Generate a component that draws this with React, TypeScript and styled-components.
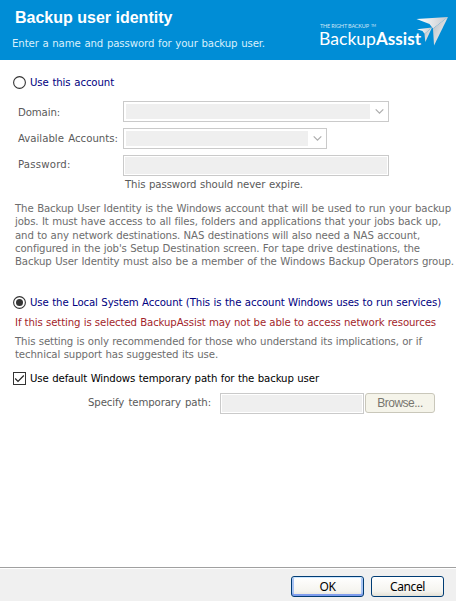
import React from 'react';
import styled, { createGlobalStyle } from 'styled-components';

const Global = createGlobalStyle`
  * { box-sizing: border-box; }
  body { margin: 0; background: #fff; }
`;

const Dialog = styled.main`
  width: 456px;
  height: 601px;
  display: flex;
  flex-direction: column;
  overflow: hidden;
  background: #fff;
  font: 11.3px/13px 'DejaVu Sans Condensed', 'Noto Sans', sans-serif;
  color: #5a5a5a;
`;

const Header = styled.header`
  height: 60px;
  flex: none;
  display: flex;
  justify-content: space-between;
  background: #008dd6;
  color: #fff;
`;

const Heading = styled.div`
  padding: 9px 0 0 12px;
`;

const Title = styled.h1`
  margin: 0 0 0 3px;
  font: bold 16px/18px 'Liberation Sans', Arial, sans-serif;
`;

const Logo = styled.svg`
  display: block;
  width: 140px;
  height: 60px;
  flex: none;
`;

/* One line of text set to an exact measure */
const Line = styled.div<{ $w: number; $track?: number }>`
  width: ${p => p.$w}px;
  height: 13px;
  line-height: 13px;
  white-space: nowrap;
  text-align: justify;
  text-align-last: justify;
  letter-spacing: ${p => p.$track ?? -0.11}px;
`;

const Subtitle = styled(Line)`
  margin-top: 10px;
  color: #d9f0fc;
`;

const Body = styled.section`
  flex: 1;
  padding: 16px 0 0 13px;
`;

const Option = styled.label<{ $color: string }>`
  display: flex;
  align-items: center;
  gap: 4px;
  height: 13px;
  color: ${p => p.$color};
`;

const Mark = styled.svg`
  display: block;
  width: 13px;
  height: 13px;
  flex: none;
`;

const Fields = styled.div`
  display: grid;
  grid-template-columns: 105px auto;
  grid-auto-rows: 21px;
  row-gap: 6px;
  justify-content: start;
  padding: 12px 0 0 5px;
`;

const Label = styled.div<{ $up?: number }>`
  padding-top: ${p => 5 - (p.$up ?? 0)}px;
`;

const Field = styled.div<{ $w: number; $combo?: boolean }>`
  width: ${p => p.$w}px;
  height: 21px;
  display: flex;
  justify-content: space-between;
  align-items: center;
  border: 1px solid #cacaca;
  padding: ${p => (p.$combo ? '2px 4px 2px 2px' : '1px')};
  background: #fff;
`;

const Fill = styled.div<{ $w?: number }>`
  height: 100%;
  width: ${p => (p.$w ? `${p.$w}px` : '100%')};
  background: #efefef;
`;

const Chevron = styled.svg`
  display: block;
  width: 9px;
  height: 7px;
`;

const Hint = styled.div`
  padding: 2px 0 0 112px;
`;

const Paragraph = styled.div<{ $top: number; $color: string; $pitch?: number }>`
  display: grid;
  grid-auto-rows: ${p => p.$pitch ?? 13}px;
  margin: ${p => p.$top}px 0 0 2px;
  color: ${p => p.$color};
`;

const Spacer = styled.div<{ $h: number }>`
  height: ${p => p.$h}px;
`;

const PathRow = styled.div`
  display: flex;
  padding: 8px 0 0 75px;
`;

const PathLabel = styled.div`
  width: 132px;
  padding-top: 3px;
`;

const Browse = styled.button`
  width: 70px;
  height: 20px;
  margin: 0 0 0 1px;
  padding: 0;
  border: 1px solid #c9c7ba;
  border-radius: 3px;
  background: #f5f4ea;
  color: #77766f;
  font: 12px/17px 'Liberation Sans', Arial, sans-serif;
  letter-spacing: -0.5px;
`;

const Footer = styled.footer`
  height: 34px;
  flex: none;
  display: flex;
  gap: 7px;
  padding: 8px 0 0 291px;
  border-top: 1px solid #a0a0a0;
  box-shadow: inset 0 1px #fff;
  background: #f0f0f0;
`;

const Push = styled.button<{ $default?: boolean }>`
  width: 73px;
  height: 21px;
  padding: 0;
  border: 1px solid #003c74;
  border-radius: 3px;
  color: #000;
  font: 12px/18px 'Noto Sans', sans-serif;
  letter-spacing: -0.4px;
  background: linear-gradient(#fff, #f5f4ef 75%, #e4e1d5);
  box-shadow: ${p =>
    p.$default
      ? 'inset 0 1px #cee7ff, inset 0 -2px #7f9ded, inset 2px 0 #a9c4f4, inset -2px 0 #a9c4f4'
      : 'none'};
`;

const Radio = ({ checked }: { checked?: boolean }) => (
  <Mark viewBox="0 0 13 13">
    <circle cx="6.5" cy="6.5" r="5.9" fill="#fff" stroke="#333" strokeWidth="1.1" />
    {checked && <circle cx="6.5" cy="6.5" r="3.5" fill="#333" />}
  </Mark>
);

const Combo = ({ width }: { width: number }) => (
  <Field $w={width} $combo>
    <Fill $w={width - 22} />
    <Chevron viewBox="0 0 9 7">
      <path d="M.7 1.3 4.5 5.1 8.3 1.3" fill="none" stroke="#adadad" strokeWidth="1.2" />
    </Chevron>
  </Field>
);

const BrandLogo = () => (
  <Logo viewBox="316 0 140 60">
    <defs>
      <linearGradient id="wing" x1="0" y1="0" x2="1" y2="1">
        <stop offset="0" stopColor="#b4b9bf" />
        <stop offset="1" stopColor="#fff" />
      </linearGradient>
      <linearGradient id="wingTop" x1="0" y1="0" x2="1" y2="0">
        <stop offset="0" stopColor="#fff" />
        <stop offset="1" stopColor="#c5c9ce" />
      </linearGradient>
    </defs>
    <g fill="#fff" fontFamily="Lato, sans-serif">
      <text x="320" y="28.3" fontSize="5.5" textLength="49" fillOpacity=".8">THE RIGHT BACKUP</text>
      <text x="371" y="27" fontSize="3.5" textLength="5" fillOpacity=".8">TM</text>
      <text x="319" y="45" fontSize="17" textLength="57" lengthAdjust="spacingAndGlyphs">Backup</text>
      <text x="376" y="45" fontSize="16.5" fontWeight="bold" textLength="45" lengthAdjust="spacingAndGlyphs">Assist</text>
    </g>
    <path d="M416.5 19 448 17 433 28.5 429.5 24Z" fill="url(#wingTop)" />
    <path d="M448 17 434 45.5 433 28.5Z" fill="url(#wing)" />
    <path d="M417 29.3 432 27.5 424.5 33.8 422.5 31Z" fill="url(#wingTop)" />
    <path d="M432 27.5 425.3 42 424.5 33.8Z" fill="url(#wing)" />
  </Logo>
);

export default function App() {
  return (
    <>
      <Global />
      <Dialog>
        <Header>
          <Heading>
            <Title>Backup user identity</Title>
            <Subtitle $w={253}>Enter a name and password for your backup user.</Subtitle>
          </Heading>
          <BrandLogo />
        </Header>
        <Body>
          <Option $color="#000080">
            <Radio />
            <Line $w={84}>Use this account</Line>
          </Option>
          <Fields>
            <Label><Line $w={43}>Domain:</Line></Label>
            <Combo width={266} />
            <Label $up={1}><Line $w={100} $track={0}>Available Accounts:</Line></Label>
            <Combo width={204} />
            <Label $up={2}><Line $w={54} $track={0.2}>Password:</Line></Label>
            <Field $w={266}><Fill /></Field>
          </Fields>
          <Hint><Line $w={178}>This password should never expire.</Line></Hint>
          <Paragraph $top={11} $color="#6d6d6d" $pitch={13.25}>
            <Line $w={436}>The Backup User Identity is the Windows account that will be used to run your backup</Line>
            <Line $w={426}>jobs. It must have access to all files, folders and applications that your jobs back up,</Line>
            <Line $w={405}>and to any network destinations. NAS destinations will also need a NAS account,</Line>
            <Line $w={405}>configured in the job's Setup Destination screen. For tape drive destinations, the</Line>
            <Line $w={439}>Backup User Identity must also be a member of the Windows Backup Operators group.</Line>
          </Paragraph>
          <Spacer $h={28} />
          <Option $color="#000080">
            <Radio checked />
            <Line $w={411}>Use the Local System Account (This is the account Windows uses to run services)</Line>
          </Option>
          <Paragraph $top={7} $color="#a31f2b">
            <Line $w={421}>If this setting is selected BackupAssist may not be able to access network resources</Line>
          </Paragraph>
          <Paragraph $top={6} $color="#6d6d6d">
            <Line $w={407}>This setting is only recommended for those who understand its implications, or if</Line>
            <Line $w={203}>technical support has suggested its use.</Line>
          </Paragraph>
          <Spacer $h={11} />
          <Option $color="#000">
            <Mark viewBox="0 0 13 13">
              <rect x=".5" y=".5" width="12" height="12" fill="#fff" stroke="#333" />
              <path d="M2.2 6.5 5 9.3 10.8 3.5" fill="none" stroke="#222" strokeWidth="1.2" />
            </Mark>
            <Line $w={289}>Use default Windows temporary path for the backup user</Line>
          </Option>
          <PathRow>
            <PathLabel><Line $w={123}>Specify temporary path:</Line></PathLabel>
            <Field $w={144}><Fill /></Field>
            <Browse>Browse...</Browse>
          </PathRow>
        </Body>
        <Footer>
          <Push $default>OK</Push>
          <Push>Cancel</Push>
        </Footer>
      </Dialog>
    </>
  );
}
